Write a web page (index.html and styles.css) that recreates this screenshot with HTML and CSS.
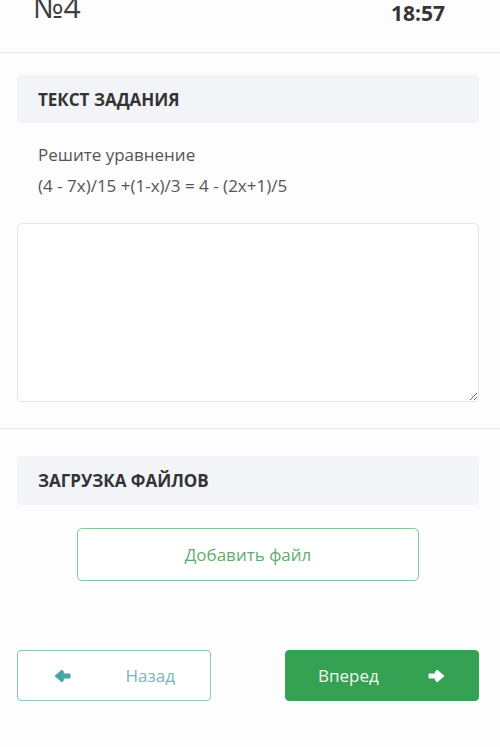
FILE: index.html
```html
<!DOCTYPE html>
<html lang="ru">
<head>
<meta charset="utf-8">
<title>№4</title>
<link rel="stylesheet" href="styles.css">
</head>
<body>
<header class="topbar">
  <span class="num">№4</span>
  <span class="time">18:57</span>
</header>
<section class="section">
  <div class="box-title">ТЕКСТ ЗАДАНИЯ</div>
  <div class="task">
    <p>Решите уравнение</p>
    <p>(4 - 7x)/15 +(1-x)/3 = 4 - (2x+1)/5</p>
  </div>
  <textarea class="answer"></textarea>
</section>
<section class="section second">
  <div class="box-title">ЗАГРУЗКА ФАЙЛОВ</div>
  <div class="add-wrap"><button class="add-btn">Добавить файл</button></div>
  <nav class="nav">
    <button class="btn back">
      <svg class="ico" viewBox="0 0 17 14" width="17" height="14"><polygon points="1.5,7 7.8,1.6 9.6,3.4 6.6,5.3 15.8,5.3 15.8,8.7 6.6,8.7 9.6,10.6 7.8,12.4" fill="currentColor" stroke="currentColor" stroke-width="1.4" stroke-linejoin="round"/></svg>
      <span>Назад</span>
    </button>
    <button class="btn next">
      <span>Вперед</span>
      <svg class="ico" viewBox="0 0 17 14" width="17" height="14"><polygon points="15.5,7 9.2,1.6 7.4,3.4 10.4,5.3 1.2,5.3 1.2,8.7 10.4,8.7 7.4,10.6 9.2,12.4" fill="currentColor" stroke="currentColor" stroke-width="1.4" stroke-linejoin="round"/></svg>
    </button>
  </nav>
</section>
</body>
</html>
```
FILE: styles.css
```css
* { box-sizing: border-box; }
html, body { margin: 0; padding: 0; }
body {
  background: #fdfdfd;
  font-family: "Open Sans", "Liberation Sans", sans-serif;
  color: #444;
  width: 500px;
  height: 747px;
  overflow: hidden;
}
.topbar {
  height: 53px;
  border-bottom: 1px solid #e6e6e6;
  display: flex;
  justify-content: space-between;
  align-items: flex-start;
  padding: 0 55px 0 33px;
}
.num {
  font-size: 30px;
  line-height: 30px;
  margin-top: -8px;
  color: #3e3e3e;
}
.time {
  font-size: 21px;
  font-weight: 700;
  line-height: 24px;
  margin-top: 1px;
  color: #353535;
}
.section {
  padding: 22px 21px 26px 17px;
  border-bottom: 1px solid #e6e6e6;
}
.second {
  border-bottom: none;
  padding-top: 27px;
}
.box-title {
  background: #f3f4f7;
  border-radius: 4px;
  height: 48px;
  padding-left: 21px;
  display: flex;
  align-items: center;
  font-size: 17px;
  font-weight: 700;
  color: #333;
}
.second .box-title { height: 49px; }
.task {
  padding: 16px 0 0 21px;
  font-size: 17px;
  line-height: 31px;
  color: #555;
}
.task p { margin: 0; }
.answer {
  display: block;
  width: 100%;
  height: 179px;
  margin-top: 22px;
  border: 1px solid #e4e4e4;
  border-radius: 5px;
  background: #fff;
  resize: vertical;
}
.add-wrap {
  display: flex;
  justify-content: center;
  padding-top: 23px;
}
.add-btn {
  width: 342px;
  height: 53px;
  background: #fff;
  border: 1px solid #86c595;
  border-radius: 5px;
  font-family: inherit;
  font-size: 17px;
  color: #5fae70;
}
.nav {
  display: flex;
  justify-content: space-between;
  margin-top: 69px;
}
.btn {
  width: 194px;
  height: 51px;
  border-radius: 4px;
  display: flex;
  align-items: center;
  justify-content: space-between;
  font-family: inherit;
  font-size: 17px;
}
.back {
  background: #fff;
  border: 1px solid #8ec0c6;
  color: #7fb3ba;
  padding: 0 35px 0 36px;
}
.back .ico { color: #46a7a3; }
.next {
  background: #35a152;
  border: 1px solid #35a152;
  color: #eef7ef;
  padding: 0 33px 0 32px;
}
.next .ico { color: #fff; }
.ico { display: block; }
```
